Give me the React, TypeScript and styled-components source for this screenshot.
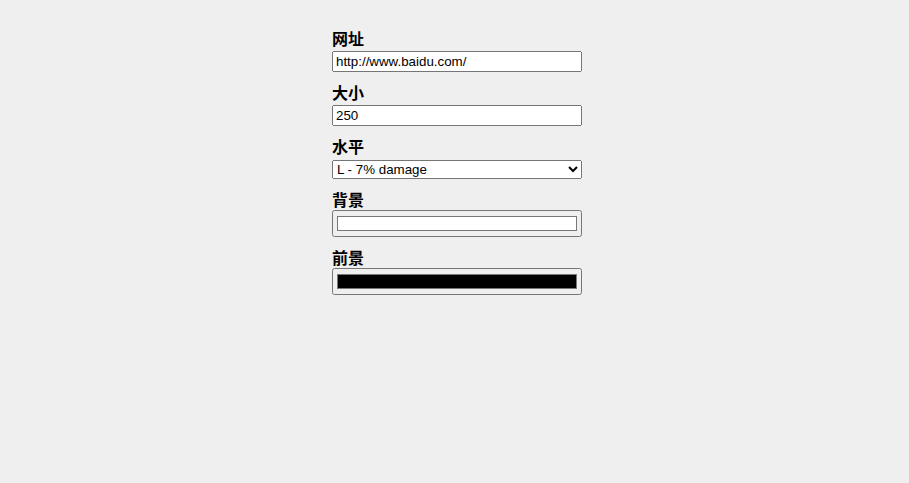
import { createGlobalStyle, styled } from 'styled-components';

const GlobalStyle = createGlobalStyle`
  html, body {
    margin: 0;
    padding: 0;
    background: #efefef;
  }
  body {
    font-family: "Liberation Sans", "Noto Sans CJK SC", sans-serif;
  }
`;

const Page = styled.div`
  display: flex;
  justify-content: center;
  padding: 31px 0 0 5px;
`;

const Form = styled.form`
  display: flex;
  flex-direction: column;
  gap: 13px;
  width: 250px;
`;

const Field = styled.div`
  display: flex;
  flex-direction: column;
`;

const Label = styled.label`
  display: block;
  font-family: "Liberation Sans", "Noto Sans CJK SC", sans-serif;
  font-size: 16px;
  font-weight: bold;
  line-height: 18px;
  margin-bottom: 2px;
  color: #000;
`;

const TextInput = styled.input`
  box-sizing: border-box;
  width: 250px;
  height: 21px;
  font-family: "Liberation Sans", sans-serif;
  font-size: 13.333px;
  margin: 0;
`;

const Select = styled.select`
  box-sizing: border-box;
  width: 250px;
  height: 19px;
  font-family: "Liberation Sans", sans-serif;
  font-size: 13.333px;
  margin: 1px 0 0;
`;

const ColorInput = styled.input`
  box-sizing: border-box;
  width: 250px;
  height: 27px;
  margin: -2px 0 0;
`;

const App = () => (
  <>
    <GlobalStyle />
    <Page>
      <Form onSubmit={(e) => e.preventDefault()}>
        <Field>
          <Label htmlFor="url">网址</Label>
          <TextInput id="url" type="text" defaultValue="http://www.baidu.com/" />
        </Field>
        <Field>
          <Label htmlFor="size">大小</Label>
          <TextInput id="size" type="text" defaultValue="250" />
        </Field>
        <Field>
          <Label htmlFor="level">水平</Label>
          <Select id="level" defaultValue="L">
            <option value="L">L - 7% damage</option>
            <option value="M">M - 15% damage</option>
            <option value="Q">Q - 25% damage</option>
            <option value="H">H - 30% damage</option>
          </Select>
        </Field>
        <Field>
          <Label htmlFor="bg">背景</Label>
          <ColorInput id="bg" type="color" defaultValue="#ffffff" />
        </Field>
        <Field>
          <Label htmlFor="fg">前景</Label>
          <ColorInput id="fg" type="color" defaultValue="#000000" />
        </Field>
      </Form>
    </Page>
  </>
);

export default App;
